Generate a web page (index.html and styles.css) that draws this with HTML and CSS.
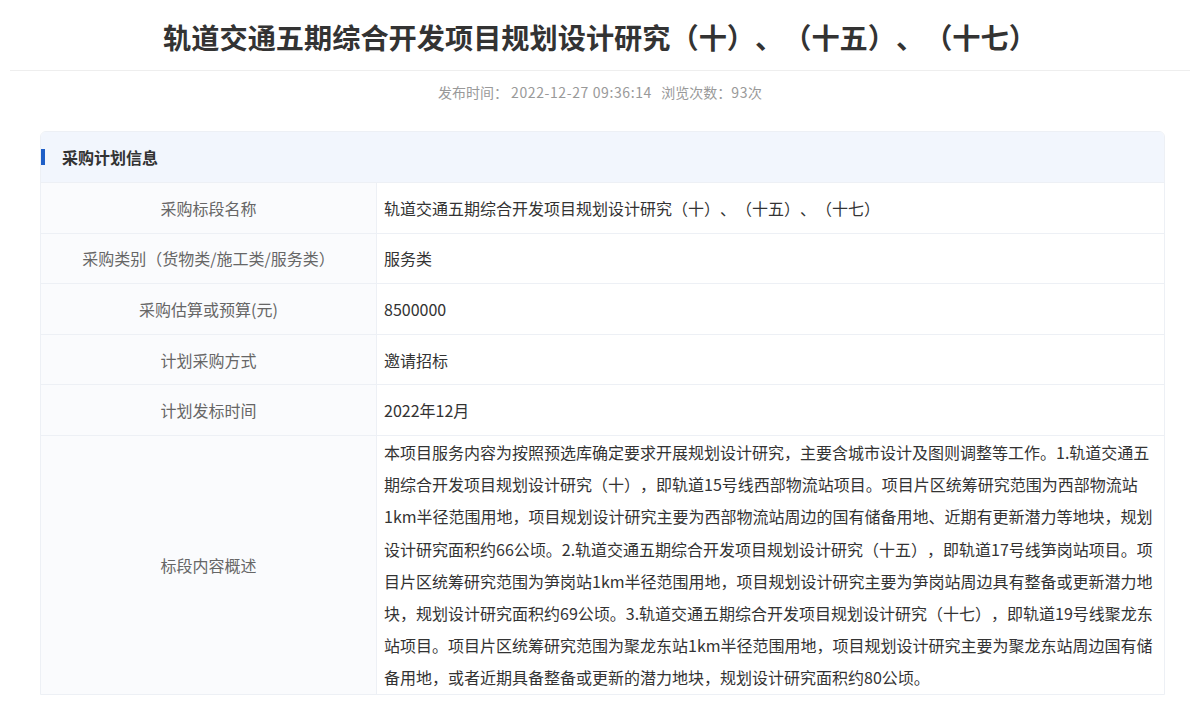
FILE: index.html
```html
<!DOCTYPE html>
<html lang="zh-CN">
<head>
<meta charset="utf-8">
<title>轨道交通五期综合开发项目规划设计研究</title>
<link rel="stylesheet" href="styles.css">
</head>
<body>
<div class="page">
  <div class="head">
    <h1 class="title">轨道交通五期综合开发项目规划设计研究（十）、（十五）、（十七）</h1>
  </div>
  <div class="meta">发布时间：&nbsp;<span class="num">2022-12-27 09:36:14</span>&nbsp;&nbsp;&nbsp;浏览次数：<span class="num">93</span>次</div>
  <section class="card">
    <div class="card-head"><span class="bar"></span>采购计划信息</div>
    <div class="table">
      <div class="row">
        <div class="label">采购标段名称</div>
        <div class="value">轨道交通五期综合开发项目规划设计研究（十）、（十五）、（十七）</div>
      </div>
      <div class="row">
        <div class="label">采购类别（货物类/施工类/服务类）</div>
        <div class="value">服务类</div>
      </div>
      <div class="row">
        <div class="label">采购估算或预算(元)</div>
        <div class="value">8500000</div>
      </div>
      <div class="row">
        <div class="label">计划采购方式</div>
        <div class="value">邀请招标</div>
      </div>
      <div class="row">
        <div class="label">计划发标时间</div>
        <div class="value">2022年12月</div>
      </div>
      <div class="row row-long">
        <div class="label">标段内容概述</div>
        <div class="value long">本项目服务内容为按照预选库确定要求开展规划设计研究，主要含城市设计及图则调整等工作。1.轨道交通五期综合开发项目规划设计研究（十），即轨道15号线西部物流站项目。项目片区统筹研究范围为西部物流站1km半径范围用地，项目规划设计研究主要为西部物流站周边的国有储备用地、近期有更新潜力等地块，规划设计研究面积约66公顷。2.轨道交通五期综合开发项目规划设计研究（十五），即轨道17号线笋岗站项目。项目片区统筹研究范围为笋岗站1km半径范围用地，项目规划设计研究主要为笋岗站周边具有整备或更新潜力地块，规划设计研究面积约69公顷。3.轨道交通五期综合开发项目规划设计研究（十七），即轨道19号线聚龙东站项目。项目片区统筹研究范围为聚龙东站1km半径范围用地，项目规划设计研究主要为聚龙东站周边国有储备用地，或者近期具备整备或更新的潜力地块，规划设计研究面积约80公顷。</div>
      </div>
    </div>
  </section>
</div>
</body>
</html>
```

FILE: styles.css
```css
* { box-sizing: border-box; }
html, body { margin: 0; padding: 0; background: #fff; }
body {
  font-family: "Noto Sans CJK SC", "Noto Sans", "Liberation Sans", sans-serif;
  font-feature-settings: "chws" 0, "halt" 0, "palt" 0;
  text-spacing-trim: space-all;
  color: #333;
}
.page { width: 1200px; }
.head {
  margin: 0 10px;
  border-bottom: 1px solid #eeeeee;
  padding-top: 17px;
  height: 71px;
}
.title {
  margin: 0;
  text-align: center;
  font-size: 28.2px;
  line-height: 40px;
  font-weight: 700;
  color: #333;
}
.meta {
  text-align: center;
  font-size: 14px;
  color: #999;
  line-height: 20px;
  margin-top: 11px;
}
.meta .num { letter-spacing: 0.6px; }
.card {
  margin: 29px 35px 0 40px;
  width: 1125px;
  border: 1px solid #edf0f5;
  border-radius: 6px 6px 0 0;
  overflow: hidden;
}
.card-head {
  height: 51px;
  background: #f2f6fd;
  display: flex;
  align-items: center;
  font-size: 16px;
  font-weight: 700;
  color: #333;
  border-bottom: 1px solid #edf0f5;
}
.bar {
  width: 4px;
  height: 16px;
  background: #1f5fc7;
  margin-right: 17px;
}
.table { display: flex; flex-direction: column; }
.row {
  display: grid;
  grid-template-columns: 336px 1fr;
  min-height: 50.6px;
  border-bottom: 1px solid #edf0f5;
}
.row:last-child { border-bottom: none; }
.label {
  background: #fafbfd;
  border-right: 1px solid #edf0f5;
  display: flex;
  align-items: center;
  justify-content: center;
  font-size: 16px;
  color: #666;
}
.value {
  display: flex;
  align-items: center;
  padding: 0 8px 0 7px;
  font-size: 16px;
  color: #333;
}
.value.long {
  display: block;
  line-height: 32.2px;
  padding-top: 0;
  padding-bottom: 0;
}
```
